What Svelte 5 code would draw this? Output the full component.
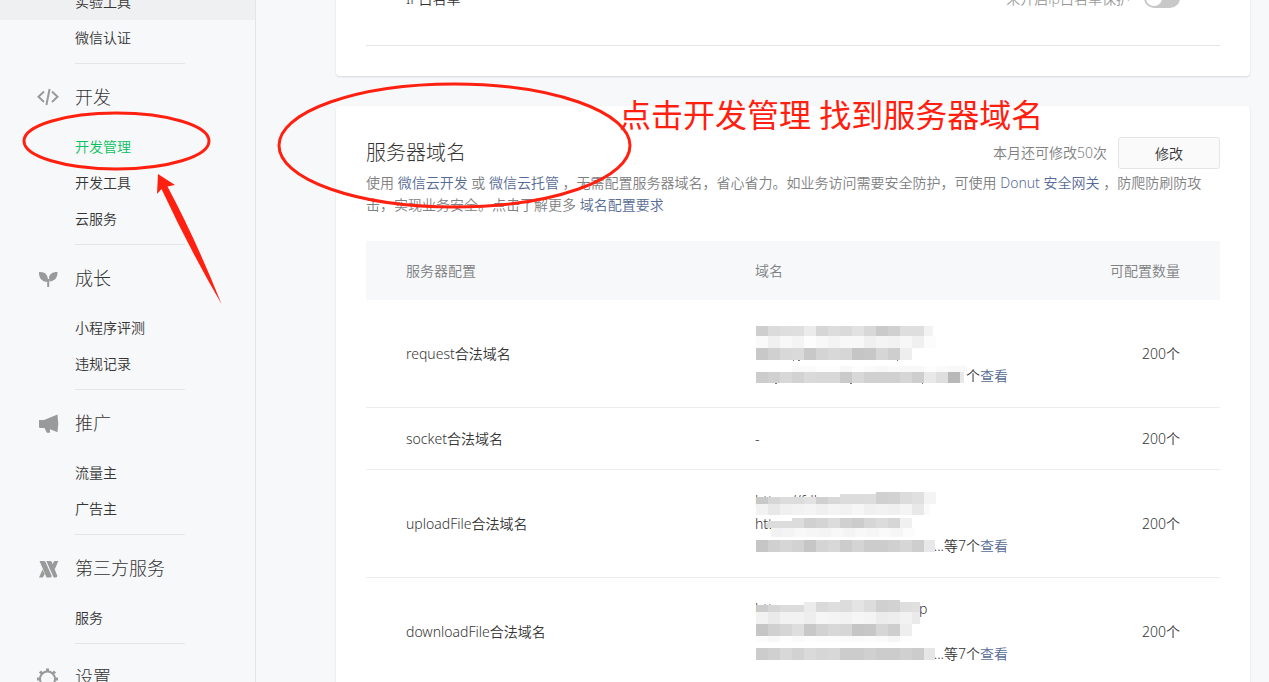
<script>
	const groups = [
		{ title: "", icon: "", items: ["实验工具", "微信认证"] },
		{ title: "开发", icon: "code", items: ["开发管理", "开发工具", "云服务"] },
		{ title: "成长", icon: "leaf", items: ["小程序评测", "违规记录"] },
		{ title: "推广", icon: "horn", items: ["流量主", "广告主"] },
		{ title: "第三方服务", icon: "third", items: ["服务"] },
		{ title: "设置", icon: "gear", items: [] },
	];

	let active = "开发管理";
	let hovered = "实验工具";
	let ipWhitelist = false;

	// Each bar is a strip of 12px blocks, two hex digits of grey per block
	const rows = [
		{
			name: "request合法域名",
			count: "200个",
			more: "个",
			texts: [],
			bars: [
				{ x: 1, y: 7, h: 10, last: 9, tones: "ce db de df eb d6 dd da e2 d8 ca d0 de de f2" },
				{ x: 1, y: 17, h: 12, last: 12, tones: "fa f0 f8 f4 fd f8 f4 f8 f8 f0 f4 f2 f7 f0 fc" },
				{ x: 1, y: 29, h: 12, last: 12, tones: "c8 d0 d8 da c8 d4 d8 d6 c5 c7 d6 ce ee" },
				{ x: 37, y: 47, h: 6, last: 10, tones: "fa fa fd fd f8 fd fa f8 fa f8 f8 fd fa f8 f8" },
				{ x: 1, y: 53, h: 11, last: 4, tones: "cc d0 d8 d2 da d8 d8 ca d8 d0 d0 d0 d6 ce e8 de b8 e8" },
			],
			specks: [[38, 41, 1], [43, 41, 2], [142, 41, 1], [20, 64, 2], [95, 64, 2], [167, 64, 1]],
		},
		{ name: "socket合法域名", count: "200个", bars: null },
		{
			name: "uploadFile合法域名",
			count: "200个",
			more: "...等7个",
			texts: [
				{ x: 0, y: 17, value: "https://fdb" },
				{ x: 0, y: 40, value: "htt" },
			],
			bars: [
				{ x: 1, y: 8, h: 7, last: 12, tones: "c8 d6 dc dc e2 d0 d8" },
				{ x: 85, y: 5, h: 10, last: 12, tones: "dc dc dd" },
				{ x: 121, y: 3, h: 12, last: 12, tones: "d0 d2 dc e0 f4" },
				{ x: 1, y: 15, h: 11, last: 6, tones: "f2 e8 f0 f2 f4 f0 f4 f2 f6 f0 f2 f0 f4 e8 fa" },
				{ x: 11, y: 34, h: 5, last: 2, tones: "dc" },
				{ x: 13, y: 32, h: 7, last: 12, tones: "dc dc" },
				{ x: 37, y: 29, h: 10, last: 12, tones: "dc d0 d4 dc d0 cc d6 dc d6 f0" },
				{ x: 16, y: 39, h: 9, last: 12, tones: "f2 f4 f8 f6 f4 f8 f4 f8 f6 fa f6 fc" },
				{ x: 1, y: 51, h: 12, last: 11, tones: "c6 d0 d6 d2 c6 d4 d8 cc d4 cc cc d0 d6 ce e8" },
			],
			specks: [],
		},
		{
			name: "downloadFile合法域名",
			count: "200个",
			more: "...等7个",
			texts: [
				{ x: 0, y: 17, value: "https" },
				{ x: 164, y: 17, value: "p" },
			],
			bars: [
				{ x: 1, y: 8, h: 7, last: 12, tones: "cc d6 dc dc" },
				{ x: 49, y: 5, h: 10, last: 12, tones: "ec da de" },
				{ x: 85, y: 3, h: 12, last: 12, tones: "dc e4 dc d0 d2" },
				{ x: 145, y: 5, h: 10, last: 8, tones: "de e0" },
				{ x: 1, y: 15, h: 12, last: 8, tones: "f2 ea f2 f2 ee f6 f4 f2 f6 f4 ec ee f2 ea" },
				{ x: 1, y: 27, h: 12, last: 12, tones: "c6 d0 d6 de c8 d2 d8 d6 c5 c7 d6 ce ee" },
				{ x: 1, y: 39, h: 6, last: 12, tones: "fc f8 fe fa fd fc fc fa fa fc fa f6 fd" },
				{ x: 1, y: 51, h: 12, last: 11, tones: "cc d0 d8 d2 da d6 d8 cc cc d0 cc cc d0 cc e6" },
			],
			specks: [],
		},
	];

	function blocks(bar) {
		const tones = bar.tones.split(" ");
		return tones.map((tone, i) => ({
			x: bar.x + i * 12,
			y: bar.y,
			h: bar.h,
			w: i === tones.length - 1 ? bar.last : 12,
			fill: "#" + tone + tone + tone,
		}));
	}
</script>

<div class="page">
	<nav class="sidebar">
		{#each groups as group}
			<section class="group">
				{#if group.title}
					<h2>
						<svg class="icon" viewBox="0 0 22 22" aria-hidden="true">
							{#if group.icon === "code"}
								<path class="line" d="M7 4.5 1.5 9.800 7 15M15 4.5 20.500 9.800 15 15M12.6 2 9.4 18" />
							{:else if group.icon === "leaf"}
								<path d="M2 4C8 3.5 11.300 6.500 11 13.800 5 14 1.800 10.500 2 4Z" />
								<path d="M20.500 4C16 3.700 12.500 6 12 9.300L12.400 13.500C18 13 20.600 9.500 20.500 4Z" />
								<path d="M10.200 11H12.200V19H10.200Z" />
							{:else if group.icon === "horn"}
								<path d="M2 7H7L20.500 1.500Q22 11 20.500 19.300L13 16.300 13 19.800H9.800L7.500 15H2.500L2 14Z" />
							{:else if group.icon === "third"}
								<path d="M2.500 3H7Q8 3 8.500 4L14.500 17.500Q15 19.500 13.500 19.500H9.500Z" />
								<path d="M9.300 3H13.300Q14.300 3 14.800 4L20.200 17.500Q20.500 19.500 19 19.500H16.700Z" />
								<path d="M5.500 11.500 7.700 16 6.500 18.500Q6 19.500 5 19.500H2Z" />
								<path d="M16.500 4Q17 3 18 3H21.300L17.700 11.500 15.500 7Z" />
							{:else}
								<circle class="ring" cx="10.500" cy="12" r="7.500" />
								<path class="teeth" d="M10.500 1.500V4.500M10.500 19.500V22.500M0 12H3M18 12H21M3 4.500 5.200 6.700M18 4.500 15.800 6.700M3 19.500 5.200 17.300M18 19.500 15.800 17.300" />
							{/if}
						</svg>
						{group.title}
					</h2>
				{/if}
				{#each group.items as item}
					<a href="#{item}" class="item" class:active={item === active} class:hovered={item === hovered}>{item}</a>
				{/each}
				<hr>
			</section>
		{/each}
	</nav>

	<main>
		<section class="card whitelist">
			<div class="setting">
				<span>IP白名单</span>
				<label class="hint" for="ip">未开启ip白名单保护</label>
				<input id="ip" type="checkbox" class="switch" bind:checked={ipWhitelist}>
			</div>
			<hr>
		</section>

		<section class="card">
			<header>
				<h1>服务器域名</h1>
				<span class="left">本月还可修改50次</span>
				<button>修改</button>
			</header>
			<p class="desc">
				使用 <a href="#cloud">微信云开发</a> 或 <a href="#host">微信云托管</a> ，无需配置服务器域名，省心省力。如业务访问需要安全防护，可使用 <a href="#donut">Donut 安全网关</a> ，防爬防刷防攻击，实现业务安全。点击了解更多 <a href="#rule">域名配置要求</a>
			</p>

			<table>
				<thead>
					<tr>
						<th class="name">服务器配置</th>
						<th>域名</th>
						<th class="count">可配置数量</th>
					</tr>
				</thead>
				<tbody>
					{#each rows as row}
						<tr>
							<td class="name">{row.name}</td>
							<td>
								{#if row.bars}
									<div class="domains">
										<svg class="mosaic" viewBox="0 0 212 69" aria-hidden="true">
											{#each row.texts as text}
												<text x={text.x} y={text.y}>{text.value}</text>
											{/each}
											{#each row.bars as bar}
												{#each blocks(bar) as b}
													<rect x={b.x} y={b.y} width={b.w} height={b.h} fill={b.fill} />
												{/each}
											{/each}
											{#each row.specks as speck}
												<rect x={speck[0]} y={speck[1]} width={speck[2]} height="1" fill="#777" />
											{/each}
										</svg>
										<span>{row.more}<a href="#view">查看</a></span>
									</div>
								{:else}
									-
								{/if}
							</td>
							<td class="count">{row.count}</td>
						</tr>
					{/each}
				</tbody>
			</table>
		</section>
	</main>

	<!-- red marks drawn over the page -->
	<svg class="marks" aria-hidden="true">
		<ellipse cx="116.500" cy="141" rx="92.500" ry="28" />
		<ellipse cx="454.500" cy="145.500" rx="175.500" ry="61.500" />
		<path d="M158 174 175 185 167.500 186.500 Q196 240 221.500 304 Q190 250 161.500 189 L157 194Z" />
	</svg>
	<p class="note">点击开发管理 找到服务器域名</p>
</div>

<style>
:global(body){
	margin: 0;
	background: #f7f8fa;
}

.page{
	position: relative;
	display: flex;
	height: 100vh;
	overflow: hidden;
	font-family: "Noto Sans", "Noto Sans CJK SC", sans-serif;
	font-size: 14px;
	font-weight: 350;
	line-height: 23px;
	color: #353535;
}

a{
	color: #576b95;
	text-decoration: none;
}

hr{
	margin: 0;
	border: 0;
	border-top: 1px solid #e4e5e7;
}

/* the page is scrolled a little, so both columns start above the window */
.sidebar{
	flex: none;
	width: 255px;
	height: 120vh;
	margin-top: -16px;
	border-right: 1px solid #e4e5e7;
}

.group hr{
	width: 110px;
	margin: 7px 0 0 75px;
}

h2{
	display: flex;
	align-items: center;
	gap: 16px;
	height: 63px;
	margin: 0;
	padding: 2px 0 0 37px;
	font-size: 18px;
	font-weight: 300;
}

.icon{
	width: 22px;
	height: 22px;
	fill: #9a9a9a;
}

.icon .line{
	fill: none;
	stroke: #9a9a9a;
	stroke-width: 2;
}

.icon .ring{
	fill: none;
	stroke: #9a9a9a;
	stroke-width: 2;
}

.icon .teeth{
	stroke: #9a9a9a;
	stroke-width: 3;
}

.item{
	display: block;
	padding-left: 75px;
	line-height: 36px;
	color: #353535;
}

.item.hovered{
	background: #eff0f2;
}

.item.active{
	color: #07c160;
}

main{
	flex: 1;
	min-width: 0;
	margin-top: -60px;
	padding: 0 19px 0 80px;
}

.card{
	margin-bottom: 30px;
	padding: 30px;
	border-radius: 4px;
	background: #fff;
	box-shadow: 0 1px 2px rgba(150, 150, 150, 0.3);
}

.whitelist{
	padding-top: 47px;
}

.setting{
	display: flex;
	align-items: center;
	height: 22px;
	padding: 0 40px 36px;
}

.hint{
	margin-left: auto;
	color: #9a9a9a;
}

.switch{
	appearance: none;
	width: 36px;
	height: 20px;
	margin: 0 0 0 14px;
	padding: 2px;
	border-radius: 10px;
	background: #c8c8c8;
}

.switch::before{
	content: "";
	display: block;
	width: 16px;
	height: 16px;
	border-radius: 50%;
	background: #fff;
}

.switch:checked{
	background: #07c160;
}

header{
	display: flex;
	align-items: center;
	height: 34px;
}

h1{
	flex: 1;
	margin: 0;
	padding-bottom: 2px;
	font-size: 20px;
	font-weight: 300;
}

.left{
	padding-bottom: 2px;
	color: #7e8081;
}

button{
	width: 102px;
	height: 32px;
	margin-left: 11px;
	border: 1px solid #e4e5e7;
	border-radius: 3px;
	background: #fafafa;
	font: inherit;
	color: #353535;
}

.desc{
	margin: 2px 0 25px;
	line-height: 22px;
	color: #7e8081;
}

table{
	width: 100%;
	table-layout: fixed;
	border-spacing: 0;
}

th{
	height: 59px;
	padding: 0 40px;
	background: #f6f8f9;
	font-weight: 350;
	text-align: left;
	color: #7e8081;
}

td{
	padding: 19px 40px;
	border-bottom: 1px solid #ebedef;
}

.name{
	width: 269px;
}

.count{
	width: 80px;
	text-align: right;
}

.domains{
	position: relative;
	display: flex;
	align-items: flex-end;
	justify-content: flex-end;
	width: 253px;
	height: 68px;
	padding-bottom: 1px;
}

.mosaic{
	position: absolute;
	top: 0;
	left: 0;
	width: 212px;
	height: 69px;
}

.mosaic text{
	fill: #353535;
}

.marks{
	position: absolute;
	top: 0;
	left: 0;
	width: 100%;
	height: 100%;
	pointer-events: none;
}

.marks ellipse{
	fill: none;
	stroke: #ff2010;
	stroke-width: 3;
}

.marks path{
	fill: #ff2010;
}

.note{
	position: absolute;
	top: 95px;
	left: 619px;
	margin: 0;
	font-size: 32px;
	font-weight: 400;
	line-height: 40px;
	white-space: nowrap;
	color: #ff2010;
}
</style>
